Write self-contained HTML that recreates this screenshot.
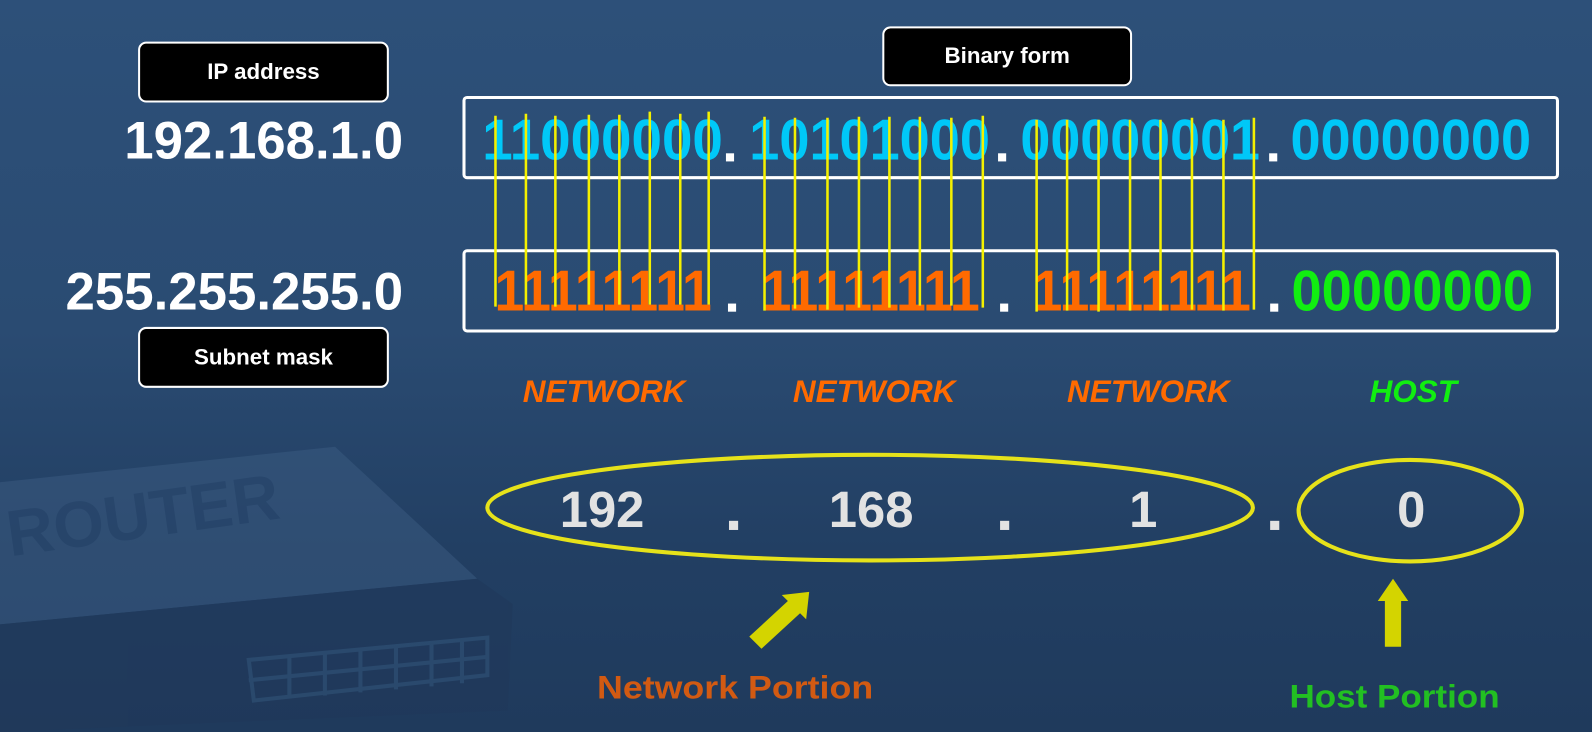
<!DOCTYPE html>
<html><head><meta charset="utf-8"><style>
html,body{margin:0;padding:0;width:1592px;height:732px;overflow:hidden}
body{background:linear-gradient(180deg,#2d5079 0%,#2a4b72 45%,#223f63 75%,#1f3a5c 100%)}
svg{position:absolute;left:0;top:0}
</style></head><body>
<svg width="1592" height="732" viewBox="0 0 1568 721" preserveAspectRatio="none" xmlns="http://www.w3.org/2000/svg" font-family="Liberation Sans, sans-serif">
<!-- router faint -->
<g opacity="0.55">
<polygon points="0,475 330,440 470,570 0,615" fill="#3a5a80"/>
<polygon points="0,615 470,570 505,595 500,700 0,721" fill="#20385a"/>
<text x="10" y="548" font-size="64" font-weight="bold" fill="#2c4a70" transform="rotate(-8 10 548)">ROUTER</text>
<g fill="none" stroke="#33557a" stroke-width="4">
<path d="M245 650 L480 628 L480 665 L250 690 Z"/>
<path d="M245 670 L480 647"/>
<path d="M285 646 V688 M320 643 V685 M355 640 V682 M390 637 V679 M425 634 V676 M455 631 V673"/>
</g>
</g>
<!-- boxes -->
<rect x="457" y="96" width="1077" height="79" rx="3" fill="none" stroke="#fff" stroke-width="3"/>
<rect x="457" y="247" width="1077" height="79" rx="3" fill="none" stroke="#fff" stroke-width="3"/>
<!-- label boxes -->
<g font-weight="bold" fill="#fff" font-size="22" text-anchor="middle">
<rect x="137" y="42" width="245" height="58" rx="7" fill="#000" stroke="#fff" stroke-width="2"/>
<text x="259.5" y="78">IP address</text>
<rect x="870" y="27" width="244" height="57" rx="7" fill="#000" stroke="#fff" stroke-width="2"/>
<text x="992" y="62">Binary form</text>
<rect x="137" y="323" width="245" height="58" rx="7" fill="#000" stroke="#fff" stroke-width="2"/>
<text x="259.5" y="359">Subnet mask</text>
</g>
<g font-weight="bold" fill="#fff" font-size="52" text-anchor="end">
<text x="397" y="156">192.168.1.0</text>
<text x="397" y="305">255.255.255.0</text>
</g>
<!-- binary row 1 -->
<g font-weight="bold" font-size="57" fill="#00c8f8">
<text x="475" y="157" textLength="237" lengthAdjust="spacingAndGlyphs">11000000</text>
<text x="738" y="157" textLength="237" lengthAdjust="spacingAndGlyphs">10101000</text>
<text x="1005" y="157" textLength="236" lengthAdjust="spacingAndGlyphs">00000001</text>
<text x="1271" y="157" textLength="237" lengthAdjust="spacingAndGlyphs">00000000</text>
</g>
<g font-weight="bold" font-size="57">
<text x="487" y="306" textLength="214" lengthAdjust="spacingAndGlyphs" fill="#ff6a00">11111111</text>
<text x="750" y="306" textLength="215" lengthAdjust="spacingAndGlyphs" fill="#ff6a00">11111111</text>
<text x="1017" y="306" textLength="215" lengthAdjust="spacingAndGlyphs" fill="#ff6a00">11111111</text>
<text x="1272" y="306" textLength="238" lengthAdjust="spacingAndGlyphs" fill="#11ee11">00000000</text>
</g>
<g fill="#fff">
<rect x="715" y="151" width="8" height="8"/><rect x="983" y="151" width="8" height="8"/><rect x="1250" y="151" width="8" height="8"/>
<rect x="717" y="299" width="8" height="8"/><rect x="985" y="299" width="8" height="8"/><rect x="1251" y="299" width="8" height="8"/>
</g>
<!-- yellow lines -->
<g stroke="#f4f000" stroke-width="2.5">
<path d="M488 114V302 M518 112V300 M547 114V302 M580 113V300 M610 113V300 M640 110V300 M670 112V300 M698 110V300"/>
<path d="M753 115V306 M783 116V304 M815 116V305 M846 115V303 M876 115V303 M906 115V301 M937 116V301 M968 114V303"/>
<path d="M1021 118V307 M1051 118V306 M1082 118V307 M1113 118V306 M1143 118V306 M1174 116V305 M1205 118V306 M1235 116V305"/>
</g>
<!-- labels -->
<g font-weight="bold" font-style="italic" font-size="31" text-anchor="middle">
<text x="595" y="396" fill="#ff6a00">NETWORK</text>
<text x="861" y="396" fill="#ff6a00">NETWORK</text>
<text x="1131" y="396" fill="#ff6a00">NETWORK</text>
<text x="1392" y="396" fill="#11ee11">HOST</text>
</g>
<!-- ellipses -->
<ellipse cx="857" cy="500" rx="377" ry="52" fill="none" stroke="#e6e21a" stroke-width="4"/>
<ellipse cx="1389" cy="503" rx="110" ry="50" fill="none" stroke="#e6e21a" stroke-width="4"/>
<g font-weight="bold" font-size="50" fill="#e2e2e2" text-anchor="middle">
<text x="593" y="519">192</text>
<text x="858" y="519">168</text>
<text x="1126" y="519">1</text>
<text x="1390" y="519">0</text>
</g>
<g fill="#e2e2e2">
<rect x="718" y="513" width="9" height="9"/><rect x="985" y="513" width="9" height="9"/><rect x="1251" y="513" width="9" height="9"/>
</g>
<!-- arrows -->
<polygon points="738,627 776,592 770,586 797,583 794,610 788,604 750,639" fill="#d4d400"/>
<polygon points="1364,637 1364,592 1357,592 1372,570 1387,592 1380,592 1380,637" fill="#d4d400"/>
<!-- portions -->
<g font-weight="bold" font-size="32">
<text x="588" y="688" textLength="272" lengthAdjust="spacingAndGlyphs" fill="#d25a12">Network Portion</text>
<text x="1270" y="697" textLength="207" lengthAdjust="spacingAndGlyphs" fill="#22c022">Host Portion</text>
</g>
</svg>
</body></html>
